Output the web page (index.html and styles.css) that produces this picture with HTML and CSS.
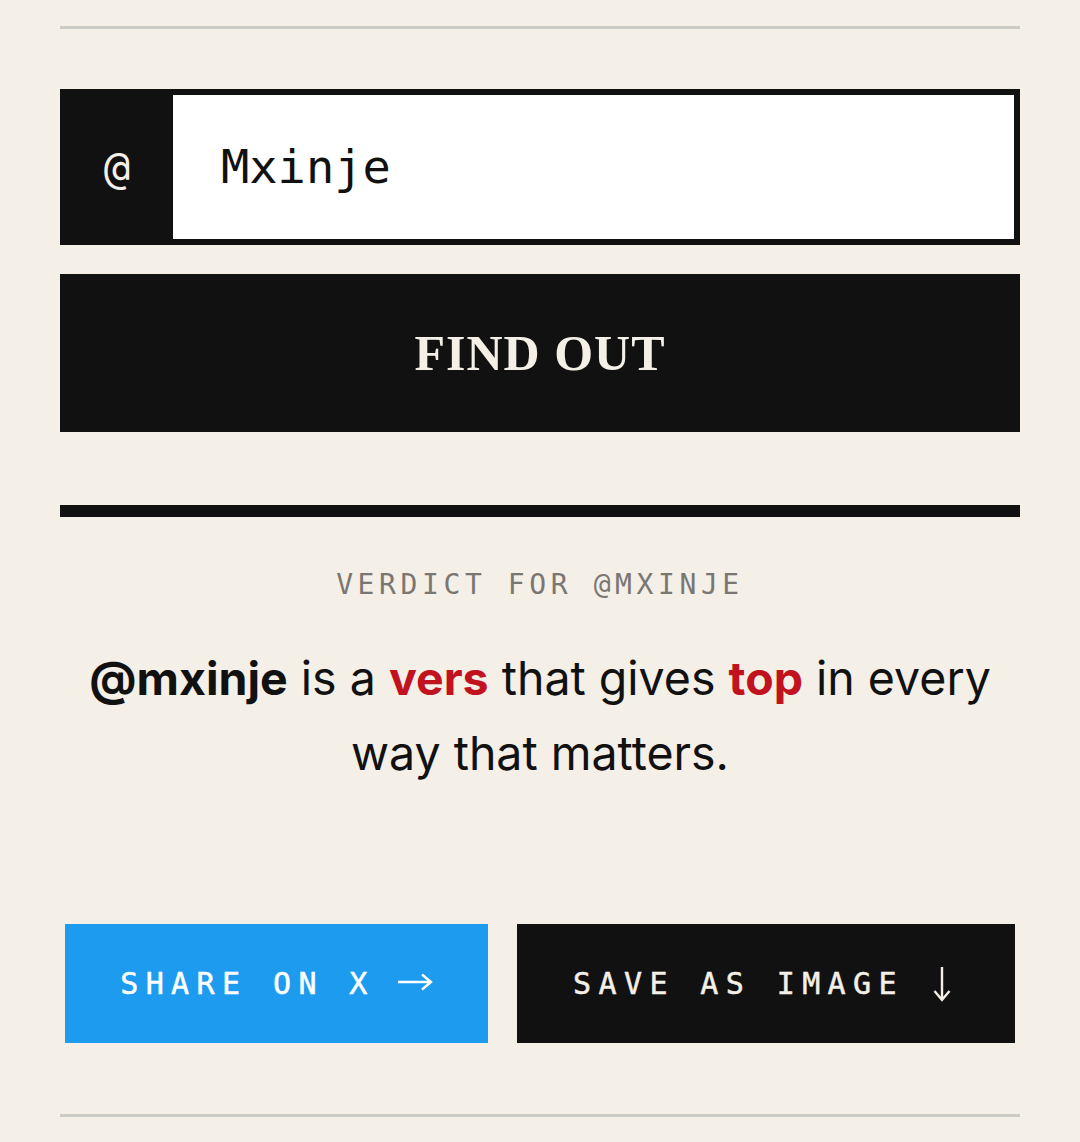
FILE: index.html
```html
<!DOCTYPE html>
<html lang="en">
<head>
<meta charset="utf-8">
<title>Verdict</title>
<link rel="stylesheet" href="styles.css">
</head>
<body>
<main class="page">
  <hr class="rule rule-top">
  <form class="lookup">
    <div class="handle-field">
      <span class="handle-prefix">@</span>
      <span class="handle-input">Mxinje</span>
    </div>
    <button type="button" class="find-btn">FIND OUT</button>
  </form>
  <hr class="rule-thick">
  <section class="verdict">
    <p class="verdict-label">VERDICT FOR @MXINJE</p>
    <p class="verdict-text"><strong class="who">@mxinje</strong> is a <strong class="hl">vers</strong> that gives <strong class="hl">top</strong> in every way that matters.</p>
  </section>
  <div class="actions">
    <button type="button" class="act act-share"><span class="act-label">SHARE ON X</span><svg class="arrow arrow-right" width="36" height="20" viewBox="0 0 36 20" aria-hidden="true"><path d="M1 10H34M25 2.5L34 10L25 17.5" fill="none" stroke="currentColor" stroke-width="2.4"/></svg></button>
    <button type="button" class="act act-save"><span class="act-label">SAVE AS IMAGE</span><svg class="arrow arrow-down" width="34" height="36" viewBox="0 0 34 36" aria-hidden="true"><path d="M17 1V34M9.5 25L17 34L24.5 25" fill="none" stroke="currentColor" stroke-width="2.4"/></svg></button>
  </div>
  <hr class="rule rule-bottom">
</main>
</body>
</html>
```

FILE: styles.css
```css
* { box-sizing: border-box; }
html, body { margin: 0; padding: 0; }
body {
  background: #f4efe7;
  color: #111111;
  font-family: "Inter", "DejaVu Sans", sans-serif;
}
.page {
  width: 960px;
  margin: 0 auto;
  padding-top: 26px;
}
.rule {
  border: 0;
  height: 3px;
  background: #cccac5;
  margin: 0;
}
.lookup {
  margin: 60px 0 0;
  display: flex;
  flex-direction: column;
  gap: 29px;
}
.handle-field {
  display: flex;
  height: 156px;
  border: 6px solid #111111;
  background: #ffffff;
}
.handle-prefix {
  width: 107px;
  background: #111111;
  color: #f4efe7;
  display: flex;
  align-items: center;
  justify-content: center;
  font-family: "DejaVu Sans Mono", "Liberation Mono", monospace;
  font-size: 44px;
  padding-right: 5px;
}
.handle-input {
  flex: 1;
  display: flex;
  align-items: center;
  padding-left: 48px;
  font-family: "DejaVu Sans Mono", "Liberation Mono", monospace;
  font-size: 47px;
  color: #111111;
  padding-bottom: 2px;
}
.find-btn {
  height: 158px;
  border: 0;
  background: #111111;
  color: #f4efe7;
  font-family: "Liberation Serif", "DejaVu Serif", serif;
  font-weight: 700;
  font-size: 50px;
  letter-spacing: 1px;
  padding: 0;
  margin: 0;
}
.rule-thick {
  border: 0;
  height: 12px;
  background: #111111;
  margin: 73px 0 0;
}
.verdict {
  text-align: center;
  padding-top: 48px;
}
.verdict-label {
  margin: 0;
  font-family: "DejaVu Sans Mono", "Liberation Mono", monospace;
  font-size: 28px;
  letter-spacing: 4.6px;
  line-height: 40px;
  color: #7a7772;
}
.verdict-text {
  margin: 36px 0 0;
  font-size: 46.5px;
  line-height: 75px;
  color: #111111;
  padding: 0 10px;
}
.verdict-text .who { font-weight: 700; color: #111111; }
.verdict-text .hl { font-weight: 700; color: #c1121f; }
.actions {
  display: grid;
  grid-template-columns: 423fr 498fr;
  gap: 29px;
  padding: 0 5px;
  margin-top: 133px;
}
.act {
  height: 119px;
  border: 0;
  margin: 0;
  padding: 0;
  font-family: "DejaVu Sans Mono", "Liberation Mono", monospace;
  font-size: 30px;
  color: #f4efe7;
  display: flex;
  align-items: center;
  justify-content: center;
  gap: 22px;
}
.act-label {
  letter-spacing: 7.4px;
  -webkit-text-stroke: 0.5px currentColor;
}
.act-share { background: #1d9bef; color: #ffffff; }
.act-save { background: #111111; gap: 21px; }
.arrow { display: block; }
.arrow-right { margin-top: -4px; }
.arrow-down { margin-top: 0; }
.rule-bottom { margin-top: 71px; }
```
